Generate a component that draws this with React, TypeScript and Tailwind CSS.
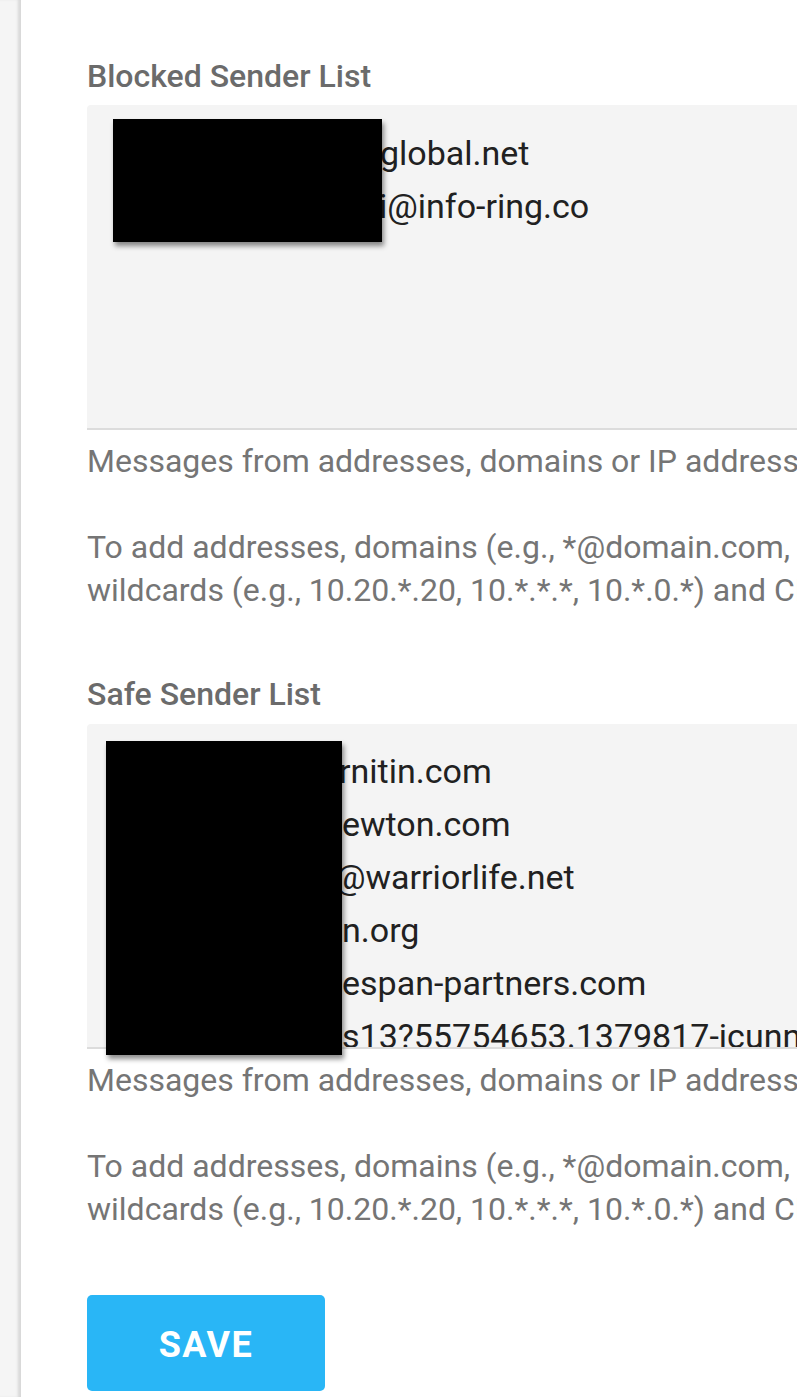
import React from "react";

const font = { fontFamily: "Roboto, 'Liberation Sans', sans-serif" };

function Line({ pre, text }: { pre: number; text: string }) {
  return (
    <div className="whitespace-nowrap">
      <span className="inline-block" style={{ width: pre }} />
      {text}
    </div>
  );
}

function Help() {
  return (
    <div className="mt-[10px] whitespace-nowrap text-[32px] leading-[43px] text-[#757575]">
      <p>Messages from addresses, domains or IP addresses in this list will be handled accordingly.</p>
      <p className="mt-[43px]">
        To add addresses, domains (e.g., *@domain.com, domain.com) or IP addresses, including
        <br />
        wildcards (e.g., 10.20.*.20, 10.*.*.*, 10.*.0.*) and CIDR notation, enter one per line.
      </p>
    </div>
  );
}

export default function App() {
  return (
    <div className="flex h-[1397px] w-[797px] overflow-hidden bg-white" style={font}>
      <div className="w-[21px] shrink-0 bg-[#f5f5f5] shadow-[inset_-4px_0_3px_-1px_rgba(0,0,0,0.12)]" />
      <div className="relative w-[1100px] shrink-0 pl-[66px] pt-[58px]">
        <h2 className="text-[32px] font-medium leading-[36px] text-[#6b6b6b]">Blocked Sender List</h2>
        <div className="relative mt-[11px] h-[325px] overflow-hidden rounded-t-[4px] border-b-2 border-[#dcdcdc] bg-[#f4f4f4] pl-[26px] pt-[22px] text-[34px] leading-[53px] text-[#212121]">
          <Line pre={267} text="global.net" />
          <Line pre={266} text="i@info-ring.co" />
          <div className="absolute left-[26px] top-[14px] h-[123px] w-[269px] bg-black shadow-[2px_4px_5px_rgba(0,0,0,0.45)]" />
        </div>
        <Help />

        <h2 className="mt-[64px] text-[32px] font-medium leading-[36px] text-[#6b6b6b]">Safe Sender List</h2>
        <div className="relative mt-[12px] h-[325px] overflow-hidden rounded-t-[4px] border-b-2 border-[#dcdcdc] bg-[#f4f4f4] pl-[26px] pt-[21px] text-[34px] leading-[53px] text-[#212121]">
          <Line pre={226} text="rnitin.com" />
          <Line pre={229} text="ewton.com" />
          <Line pre={222} text="@warriorlife.net" />
          <Line pre={229} text="n.org" />
          <Line pre={229} text="espan-partners.com" />
          <Line pre={229} text="s13?55754653.1379817-icunnect.com" />
        </div>
        <div className="absolute left-[85px] top-[741px] z-10 h-[314px] w-[236px] bg-black shadow-[2px_4px_5px_rgba(0,0,0,0.45)]" />
        <Help />

        <button className="mt-[64px] flex h-[96px] w-[238px] items-center justify-center rounded-[5px] bg-[#29b6f6] pt-[3px] text-[36px] font-bold tracking-[1.5px] text-white">
          SAVE
        </button>
      </div>
    </div>
  );
}
